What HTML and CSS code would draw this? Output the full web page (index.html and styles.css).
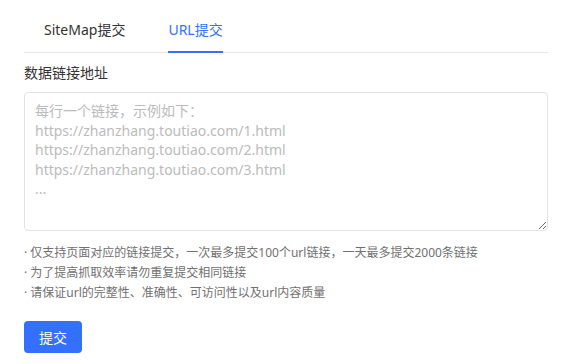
FILE: index.html
```html
<!DOCTYPE html>
<html lang="zh-CN">
<head>
    <meta charset="UTF-8">
    <meta name="viewport" content="width=device-width, initial-scale=1.0">
    <title>URL提交</title>
    <link rel="stylesheet" href="styles.css">
</head>
<body>
    <div class="panel">
        <div class="tabs">
            <div class="tab">SiteMap提交</div>
            <div class="tab active">URL提交</div>
        </div>

        <div class="field-label">数据链接地址</div>
        <textarea class="url-input" placeholder="每行一个链接，示例如下：
https://zhanzhang.toutiao.com/1.html
https://zhanzhang.toutiao.com/2.html
https://zhanzhang.toutiao.com/3.html
..."></textarea>

        <ul class="tips">
            <li>· 仅支持页面对应的链接提交，一次最多提交100个url链接，一天最多提交2000条链接</li>
            <li>· 为了提高抓取效率请勿重复提交相同链接</li>
            <li>· 请保证url的完整性、准确性、可访问性以及url内容质量</li>
        </ul>

        <button class="submit-btn">提交</button>
    </div>
</body>
</html>
```

FILE: styles.css
```css
body {
    margin: 0;
    background-color: #fff;
    font-family: "Noto Sans", "Noto Sans CJK SC", sans-serif;
    color: #333;
}
.panel {
    width: 524px;
    padding: 0 24px;
}
.tabs {
    display: flex;
    gap: 43px;
    padding-left: 20px;
    border-bottom: 1px solid #e5e6eb;
}
.tab {
    font-size: 14px;
    line-height: 20px;
    padding: 20px 0 11px;
    color: #333;
    border-bottom: 2px solid transparent;
    margin-bottom: -1px;
}
.tab.active {
    color: #3370ff;
    border-bottom-color: #3370ff;
}
.field-label {
    font-size: 14px;
    line-height: 20px;
    margin-top: 10px;
}
.url-input {
    display: block;
    box-sizing: border-box;
    width: 524px;
    height: 139px;
    margin-top: 9px;
    padding: 8px 10px;
    border: 1px solid #e3e3e3;
    border-radius: 4px;
    font-family: inherit;
    font-size: 14px;
    line-height: 19.5px;
    color: #333;
    resize: vertical;
}
.url-input::placeholder {
    color: #bbb;
}
.tips {
    list-style: none;
    margin: 12px 0 0;
    padding: 0;
    font-size: 12px;
    line-height: 20px;
    color: #707070;
}
.submit-btn {
    display: block;
    margin-top: 18px;
    width: 58px;
    height: 32px;
    border: none;
    border-radius: 4px;
    background-color: #3370ff;
    color: #fff;
    font-family: inherit;
    font-size: 14px;
}
```
